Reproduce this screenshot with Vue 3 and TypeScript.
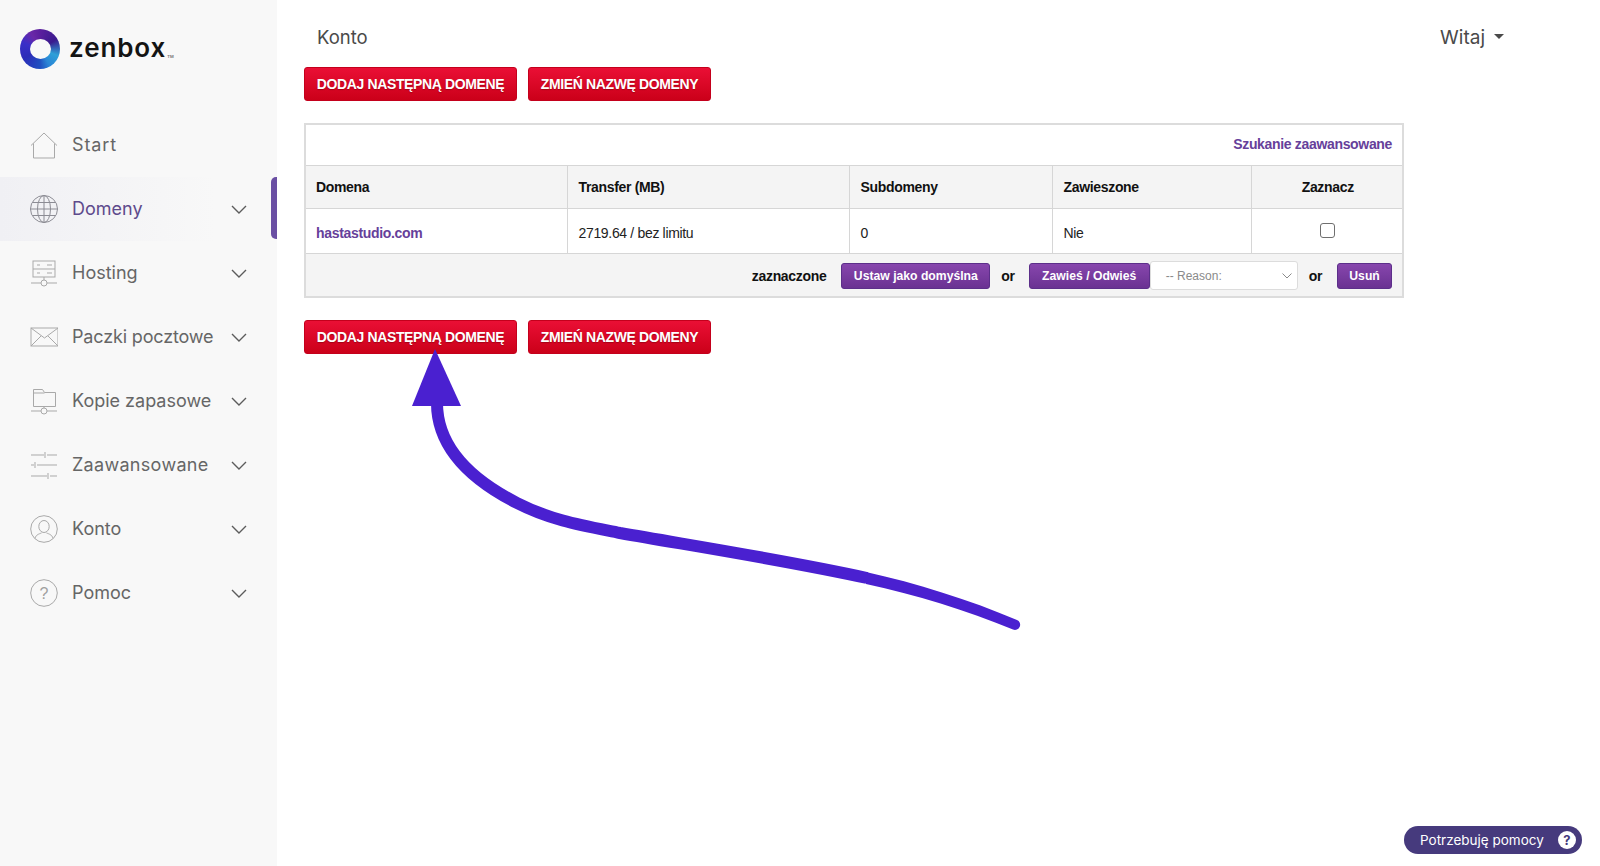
<script setup lang="ts">
interface NavItem { label: string; icon: string; active?: boolean; chevron: boolean; tune?: string }
const nav: NavItem[] = [
  { label: 'Start', icon: 'home', chevron: false, tune: 'wide-a' },
  { label: 'Domeny', icon: 'globe', active: true, chevron: true },
  { label: 'Hosting', icon: 'server', chevron: true },
  { label: 'Paczki pocztowe', icon: 'mail', chevron: true, tune: 'tight-a' },
  { label: 'Kopie zapasowe', icon: 'folder', chevron: true },
  { label: 'Zaawansowane', icon: 'sliders', chevron: true, tune: 'wide-b' },
  { label: 'Konto', icon: 'user', chevron: true },
  { label: 'Pomoc', icon: 'help', chevron: true },
]
</script>

<template>
  <div class="page">
    <aside class="sidebar">
      <div class="brand">
        <div class="ring"><div class="hole"></div></div>
        <span class="wordmark">zenbox</span><span class="tm">TM</span>
      </div>
      <nav class="nav">
        <div v-for="item in nav" :key="item.label" class="nav-item" :class="{ active: item.active }">
          <svg class="nav-icon" width="28" height="28" viewBox="0 0 28 28" fill="none" stroke="#a9a9a9" stroke-width="1">
            <template v-if="item.icon === 'home'">
              <path d="M1 14.5 14 2l13 12.5M3.5 12.5V27h21V12.5" />
            </template>
            <template v-else-if="item.icon === 'globe'">
              <g stroke="#8c8c94">
                <circle cx="14" cy="14" r="13.5" />
                <ellipse cx="14" cy="14" rx="6.5" ry="13.5" />
                <path d="M14 .5v27M.5 14h27M2.5 7.5h23M2.5 20.5h23" />
              </g>
            </template>
            <template v-else-if="item.icon === 'server'">
              <rect x="3" y="2" width="22" height="16" />
              <path d="M3 10h22M7 6h3M17 6h5M7 14h3M17 14h5M14 18v3M1 24h10M17 24h10" />
              <circle cx="14" cy="24" r="3" />
            </template>
            <template v-else-if="item.icon === 'mail'">
              <rect x="1" y="5" width="27" height="18" />
              <path d="m1 5 13.5 10L28 5M1 23l10-10M28 23 18 13" />
            </template>
            <template v-else-if="item.icon === 'folder'">
              <path d="M3.5 19.5V2.5h9l2 3h11v14z" />
              <path d="M3.5 6h11M14 20v1M1 24h10M17 24h10" />
              <circle cx="14" cy="24" r="3" />
            </template>
            <template v-else-if="item.icon === 'sliders'">
              <path d="M1 4h13M17 4h10M15 1v6M1 14h3M7 14h20M5 11v6M1 25h16M20 25h7M18 22v6" />
            </template>
            <template v-else-if="item.icon === 'user'">
              <circle cx="14" cy="14" r="13.3" />
              <ellipse cx="14" cy="11.5" rx="5.2" ry="6" />
              <path d="M5 23.5c1-4 4-4.500 6.500-5.500M23 23.500c-1-4-4-4.500-6.500-5.500" />
            </template>
            <template v-else>
              <circle cx="14" cy="14" r="13.3" />
              <text x="14" y="19.500" text-anchor="middle" class="q" fill="#a0a0a0" stroke="none">?</text>
            </template>
          </svg>
          <span class="nav-label" :class="item.tune">{{ item.label }}</span>
          <svg v-if="item.chevron" class="chev" width="16" height="9" viewBox="0 0 16 9" fill="none" stroke="#5c5c5c" stroke-width="1.400">
            <path d="m1 1 7 7 7-7" />
          </svg>
        </div>
      </nav>
      <div class="indicator"></div>
    </aside>

    <main class="main">
      <header class="topbar">
        <span class="title">Konto</span>
        <span class="user">Witaj<i class="caret"></i></span>
      </header>

      <div class="actions">
        <button class="red wide">DODAJ NASTĘPNĄ DOMENĘ</button>
        <button class="red">ZMIEŃ NAZWĘ DOMENY</button>
      </div>

      <table class="domains">
        <colgroup>
          <col class="c1" /><col class="c2" /><col class="c3" /><col class="c4" /><col class="c5" />
        </colgroup>
        <tbody>
          <tr class="search-row">
            <td colspan="5"><a class="link">Szukanie zaawansowane</a></td>
          </tr>
          <tr class="head-row">
            <th>Domena</th><th>Transfer (MB)</th><th>Subdomeny</th><th>Zawieszone</th><th class="center">Zaznacz</th>
          </tr>
          <tr class="data-row">
            <td><a class="link">hastastudio.com</a></td>
            <td>2719.64 / bez limitu</td>
            <td>0</td>
            <td>Nie</td>
            <td class="center"><span class="check"></span></td>
          </tr>
          <tr class="foot-row">
            <td colspan="5">
              <div class="bulk">
                <b class="z">zaznaczone</b>
                <button class="purple b1">Ustaw jako domyślna</button>
                <b class="or">or</b>
                <button class="purple b2">Zawieś / Odwieś</button>
                <div class="select">
                  <span>-- Reason:</span>
                  <svg width="10" height="6" viewBox="0 0 10 6" fill="none" stroke="#8a8a8a" stroke-width="1"><path d="m.5.5 4.500 4.500L9.500.5" /></svg>
                </div>
                <b class="or or2">or</b>
                <button class="purple b3">Usuń</button>
              </div>
            </td>
          </tr>
        </tbody>
      </table>

      <div class="actions lower">
        <button class="red wide">DODAJ NASTĘPNĄ DOMENĘ</button>
        <button class="red">ZMIEŃ NAZWĘ DOMENY</button>
      </div>
    </main>

    <svg class="arrow" width="1600" height="866" viewBox="0 0 1600 866" fill="none">
      <path d="M437 403C437 445 468 478 517 503C552 521 585 526 620 533C700 547 790 561 867 578" stroke="#4a20d0" stroke-width="12" />
      <path d="M866 572C916 583 970 600 1017 620A5 5 0 0 1 1013 629.500C966 610 916 595 866 584Z" fill="#4a20d0" />
      <path d="M435 349 461 406H412Z" fill="#4a20d0" />
    </svg>

    <div class="help">
      <span>Potrzebuję pomocy</span>
      <span class="help-q">?</span>
    </div>
  </div>
</template>

<style scoped>
.page {
  position: relative;
  display: flex;
  width: 1600px;
  height: 866px;
  overflow: hidden;
  background: #fff;
  font-family: "Liberation Sans", Arial, sans-serif;
}
.sidebar {
  position: relative;
  flex: 0 0 277px;
  background: #f8f8f8;
}
.brand {
  display: flex;
  align-items: center;
  height: 113px;
  padding: 0 0 15px 20px;
  box-sizing: border-box;
}
.ring {
  display: flex;
  align-items: center;
  justify-content: center;
  width: 40px;
  height: 40px;
  border-radius: 50%;
  background: conic-gradient(#5b1f9e, #3a1a8e 60deg, #2ea0d8 110deg, #2a86d6 150deg, #1f4fc0 180deg, #2c2cb8 240deg, #3a2fc8 290deg, #6a28a8 330deg, #5b1f9e);
}
.hole {
  width: 21px;
  height: 20px;
  border-radius: 50%;
  background: #f8f8f8;
}
.wordmark {
  margin: -3px 0 0 9px;
  font-family: Inter, sans-serif;
  font-size: 26px;
  font-weight: 600;
  letter-spacing: 0.9px;
  color: #141414;
}
.tm {
  margin: 14px 0 0 1px;
  font-family: Inter, sans-serif;
  font-size: 4px;
  font-weight: 700;
  color: #777;
}
.nav-item {
  display: flex;
  align-items: center;
  height: 64px;
  padding-left: 30px;
  box-sizing: border-box;
  position: relative;
}
.nav-item.active {
  background: linear-gradient(90deg, #f0f0f4, #f8f8f8 78%);
}
.nav-icon { flex: none; }
.q {
  font-family: "Liberation Sans", sans-serif;
  font-size: 16px;
}
.nav-label {
  margin: -1px 0 0 14px;
  font-family: Inter, sans-serif;
  font-size: 18px;
  color: #666;
}
.wide-a { letter-spacing: 0.9px; }
.wide-b { letter-spacing: 0.3px; }
.tight-a { letter-spacing: -0.15px; }
.active .nav-label { color: #5e4a8c; }
.chev {
  position: absolute;
  left: 231px;
  top: 28px;
}
.indicator {
  position: absolute;
  left: 271px;
  top: 177px;
  width: 6px;
  height: 62px;
  border-radius: 5px 0 0 5px;
  background: #6a4fa3;
}
.main {
  flex: 1;
  padding-left: 27px;
}
.topbar {
  display: flex;
  justify-content: space-between;
  align-items: center;
  height: 52px;
  margin-top: 11px;
  width: 1200px;
  padding-left: 13px;
  box-sizing: border-box;
  font-family: Inter, sans-serif;
  font-size: 19px;
  color: #4a4a4a;
}
.title { font-size: 18.500px; }
.user {
  display: flex;
  align-items: center;
}
.caret {
  width: 0;
  height: 0;
  margin-left: 9px;
  margin-top: -2px;
  border-left: 5px solid transparent;
  border-right: 5px solid transparent;
  border-top: 5px solid #4a4a4a;
}
.actions {
  display: flex;
  gap: 11px;
  margin-top: 4px;
}
.actions.lower { margin-top: 22px; }
button {
  font-family: "Liberation Sans", Arial, sans-serif;
  font-weight: 700;
  color: #fff;
  cursor: pointer;
}
.red {
  width: 183px;
  height: 34px;
  padding: 0 0 1px;
  border: 1px solid #c4001c;
  border-radius: 3px;
  background: linear-gradient(180deg, #ea0f35, #cb0019);
  font-size: 14px;
  letter-spacing: -0.38px;
  text-shadow: 0 1px 1px rgba(90, 0, 0, 0.4);
}
.red.wide { width: 213px; }
.domains {
  width: 1098px;
  margin-top: 22px;
  table-layout: fixed;
  border-collapse: collapse;
  border: 2px solid #dcdcdc;
  font-size: 14px;
  letter-spacing: -0.33px;
  color: #222;
}
.c1 { width: 262px; }
.c2 { width: 282px; }
.c3 { width: 203px; }
.c4 { width: 199px; }
.c5 { width: 152px; }
td, th {
  padding: 0 11px;
  border: 1px solid #d6d6d6;
  text-align: left;
}
tr > :first-child { padding-left: 10px; }
.center { text-align: center; }
th.center, td.center { padding-left: 13px; }
.search-row td {
  height: 41px;
  text-align: right;
  padding: 0 10px 2px 0;
  box-sizing: border-box;
}
.link {
  font-weight: 700;
  color: #66409a;
}
.head-row th {
  height: 43px;
  box-sizing: border-box;
  background: #f4f4f4;
  font-weight: 700;
  color: #111;
}
.data-row td {
  height: 45px;
  padding-top: 4px;
  box-sizing: border-box;
}
.check {
  display: inline-block;
  width: 13px;
  height: 13px;
  margin-bottom: 4px;
  vertical-align: middle;
  border: 1px solid #6f6f6f;
  border-radius: 3px;
  background: #fff;
}
.foot-row td {
  height: 44px;
  padding: 2px 10px 0 0;
  box-sizing: border-box;
  background: #f4f4f4;
}
.bulk {
  display: flex;
  align-items: center;
  justify-content: flex-end;
}
.z { margin-right: 15px; color: #111; }
.or { margin: 0 14px 0 11px; color: #111; }
.or2 { margin: 0 15px 0 11px; }
.purple {
  height: 26px;
  padding: 0;
  border: 1px solid #5c2f8a;
  border-radius: 3px;
  background: linear-gradient(180deg, #8746ad, #6a3292);
  font-size: 12.200px;
  letter-spacing: 0;
}
.b1 { width: 149px; }
.b2 { width: 121px; }
.b3 { width: 55px; }
.select {
  display: flex;
  align-items: center;
  justify-content: space-between;
  width: 148px;
  height: 29px;
  padding: 0 5px 0 15px;
  box-sizing: border-box;
  border: 1px solid #dcdcdc;
  border-radius: 3px;
  background: #fff;
  font-size: 12px;
  letter-spacing: 0;
  color: #8a8a8a;
}
.arrow {
  position: absolute;
  left: 0;
  top: 0;
  pointer-events: none;
}
.help {
  position: absolute;
  left: 1404px;
  top: 826px;
  display: flex;
  align-items: center;
  justify-content: space-between;
  width: 178px;
  height: 28px;
  padding: 0 6px 0 16px;
  box-sizing: border-box;
  border-radius: 14px;
  background: #463a7d;
  font-family: Inter, sans-serif;
  font-size: 13.500px;
  color: #fff;
}
.help-q {
  display: flex;
  align-items: center;
  justify-content: center;
  width: 18px;
  height: 18px;
  border-radius: 50%;
  background: #fff;
  color: #463a7d;
  font-size: 13px;
  font-weight: 700;
}
</style>
